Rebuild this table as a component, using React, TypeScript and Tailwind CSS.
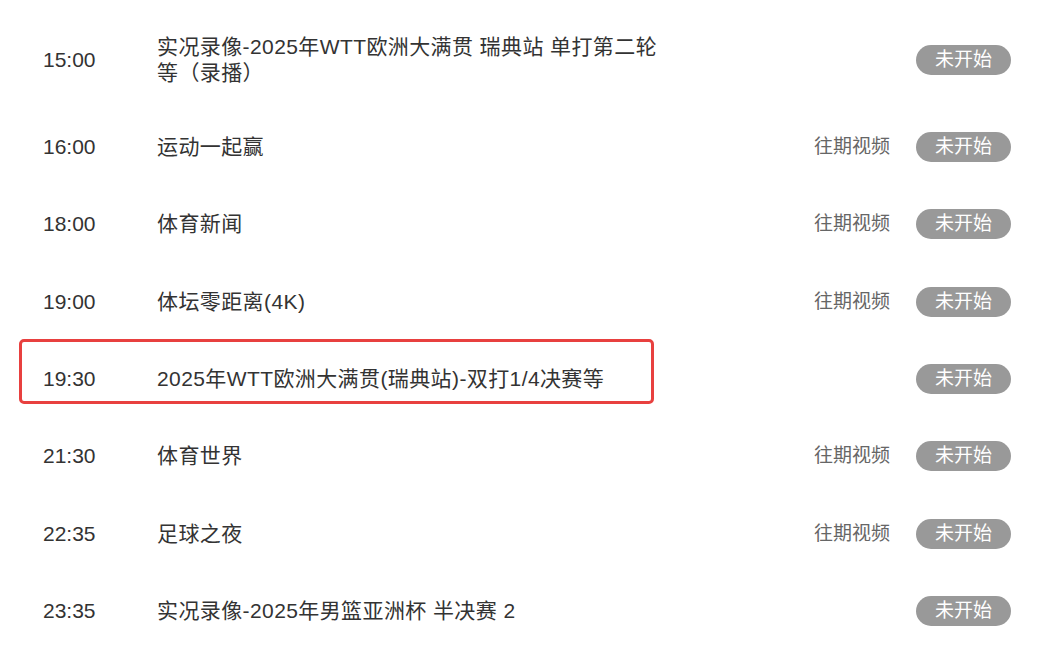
import React from 'react';

type Row = {
  time: string;
  title: string;
  replay?: boolean;
  marked?: boolean;
};

const rows: Row[] = [
  { time: '15:00', title: '实况录像-2025年WTT欧洲大满贯 瑞典站 单打第二轮等（录播）' },
  { time: '16:00', title: '运动一起赢', replay: true },
  { time: '18:00', title: '体育新闻', replay: true },
  { time: '19:00', title: '体坛零距离(4K)', replay: true },
  { time: '19:30', title: '2025年WTT欧洲大满贯(瑞典站)-双打1/4决赛等', marked: true },
  { time: '21:30', title: '体育世界', replay: true },
  { time: '22:35', title: '足球之夜', replay: true },
  { time: '23:35', title: '实况录像-2025年男篮亚洲杯 半决赛 2' },
];

export default function App() {
  return (
    <div
      className="w-[1037px] h-[665px] bg-white overflow-hidden pt-[11.5px]"
      style={{ fontFamily: '"Liberation Sans", "Noto Sans CJK SC", sans-serif' }}
    >
      {rows.map((row, i) => (
        <div
          key={row.time}
          className={`relative flex items-center pl-[43px] pr-[26px] ${i === 0 ? 'h-[97px]' : 'h-[77.33px]'}`}
        >
          {row.marked && (
            <div className="absolute left-[19px] top-[-1px] w-[635px] h-[65px] border-[3px] border-[#e8403f] rounded-[5px]" />
          )}
          <div className="w-[114px] shrink-0 text-[21px] leading-[26px] text-[#333]">{row.time}</div>
          <div className="w-[510px] shrink-0 text-[21px] leading-[26px] tracking-[0.4px] text-[#333]">{row.title}</div>
          <div className="flex-1 flex items-center justify-end gap-[26px]">
            {row.replay && <span className="text-[19px] text-[#666] leading-[26px]">往期视频</span>}
            <span className="w-[95px] h-[30px] rounded-full bg-[#999] text-white text-[19px] flex items-center justify-center">
              未开始
            </span>
          </div>
        </div>
      ))}
    </div>
  );
}
